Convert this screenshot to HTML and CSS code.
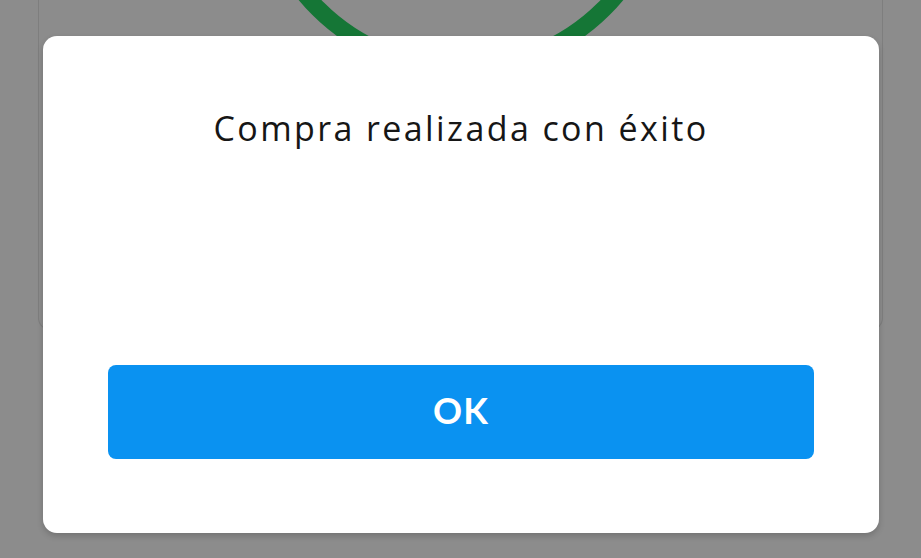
FILE: index.html
```html
<!DOCTYPE html>
<html lang="es">
<head>
<meta charset="utf-8">
<title>Compra realizada</title>
<link rel="stylesheet" href="styles.css">
</head>
<body>
<div class="page">
  <div class="bg-card">
    <svg class="check-circle" width="460" height="120" viewBox="0 0 460 120">
      <circle cx="230" cy="-134" r="202" fill="none" stroke="#157636" stroke-width="17"/>
    </svg>
  </div>
  <div class="overlay">
    <div class="modal">
      <p class="modal-title">Compra realizada con éxito</p>
      <button class="ok-btn">OK</button>
    </div>
  </div>
</div>
</body>
</html>
```
FILE: styles.css
```css
html, body {
  margin: 0;
  padding: 0;
  height: 100%;
}
body {
  background: #8c8c8c;
  font-family: "Open Sans", "Noto Sans", sans-serif;
  overflow: hidden;
}
.page {
  position: relative;
  display: flow-root;
  width: 921px;
  height: 558px;
}
.bg-card {
  margin: -20px 38px 0 38px;
  height: 349px;
  border: 1px solid #7e7e7e;
  border-top: none;
  border-radius: 0 0 12px 12px;
  display: flex;
  justify-content: center;
  overflow: hidden;
}
.check-circle {
  margin-top: 20px;
  display: block;
}
.overlay {
  position: absolute;
  left: 43px;
  top: 36px;
  width: 836px;
  height: 497px;
}
.modal {
  height: 100%;
  box-sizing: border-box;
  background: #ffffff;
  border-radius: 14px;
  box-shadow: 0 3px 6px rgba(0, 0, 0, 0.18);
  display: flex;
  flex-direction: column;
  align-items: center;
  padding: 67px 65px 74px;
}
.modal-title {
  margin: 0;
  font-size: 34px;
  line-height: 50px;
  color: #161616;
  letter-spacing: 2.4px;
}
.ok-btn {
  margin-top: auto;
  width: 100%;
  height: 94px;
  border: none;
  border-radius: 8px;
  background: #0a92f1;
  color: #ffffff;
  font-family: "Lato", sans-serif;
  font-size: 36px;
  font-weight: 700;
  letter-spacing: 1px;
  padding: 0 0 4px;
}
```
